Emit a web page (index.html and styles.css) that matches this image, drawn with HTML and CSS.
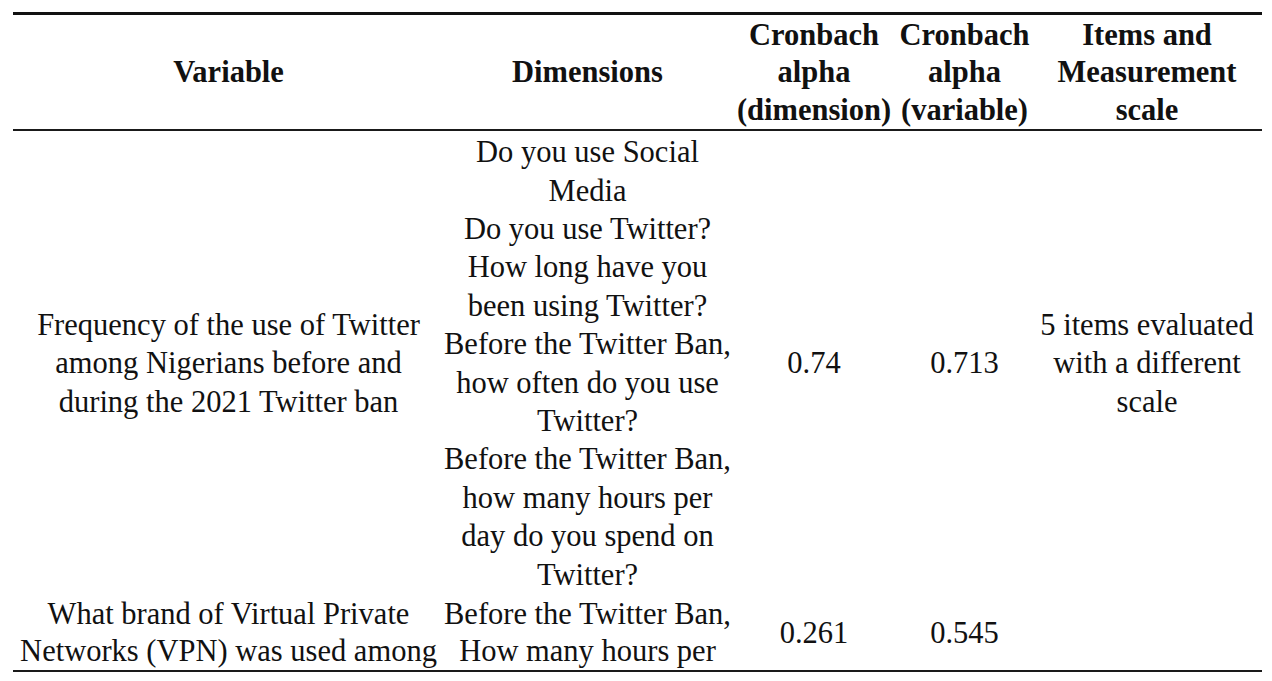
FILE: index.html
```html
<!DOCTYPE html>
<html lang="en">
<head>
<meta charset="utf-8">
<title>Table</title>
<link rel="stylesheet" href="styles.css">
</head>
<body>
<table class="data">
  <colgroup>
    <col class="col-var">
    <col class="col-dim">
    <col class="col-cad">
    <col class="col-cav">
    <col class="col-items">
  </colgroup>
  <thead>
    <tr>
      <th>Variable</th>
      <th>Dimensions</th>
      <th>Cronbach<br>alpha<br>(dimension)</th>
      <th>Cronbach<br>alpha<br>(variable)</th>
      <th>Items and<br>Measurement<br>scale</th>
    </tr>
  </thead>
  <tbody>
    <tr>
      <td>Frequency of the use of Twitter<br>among Nigerians before and<br>during the 2021 Twitter ban</td>
      <td>Do you use Social<br>Media<br>Do you use Twitter?<br>How long have you<br>been using Twitter?<br>Before the Twitter Ban,<br>how often do you use<br>Twitter?<br>Before the Twitter Ban,<br>how many hours per<br>day do you spend on<br>Twitter?</td>
      <td>0.74</td>
      <td>0.713</td>
      <td>5 items evaluated<br>with a different<br>scale</td>
    </tr>
    <tr class="last">
      <td>What brand of Virtual Private<br>Networks (VPN) was used among</td>
      <td>Before the Twitter Ban,<br>How many hours per</td>
      <td>0.261</td>
      <td>0.545</td>
      <td></td>
    </tr>
  </tbody>
</table>
</body>
</html>
```
FILE: styles.css
```css
html, body {
  margin: 0;
  padding: 0;
  background: #ffffff;
}

body {
  font-family: "Liberation Serif", "Times New Roman", serif;
  color: #111111;
}

.data {
  margin: 12px 0 0 13px;
  width: 1249px;
  table-layout: fixed;
  border-collapse: separate;
  border-spacing: 0;
  font-size: 30.5px;
  line-height: 38.4px;
}

.col-var { width: 431px; }
.col-dim { width: 287px; }
.col-cad { width: 166px; }
.col-cav { width: 135px; }
.col-items { width: 230px; }

.data th,
.data td {
  padding: 2px 0 0 0;
  text-align: center;
  vertical-align: middle;
  white-space: nowrap;
}

.data th {
  font-weight: bold;
  line-height: 37.4px;
  border-top: 3px solid #111111;
  border-bottom: 2px solid #1a1a1a;
}

.data td {
  font-weight: normal;
}

.data .last td {
  line-height: 37px;
  border-bottom: 2px solid #1a1a1a;
}
```
